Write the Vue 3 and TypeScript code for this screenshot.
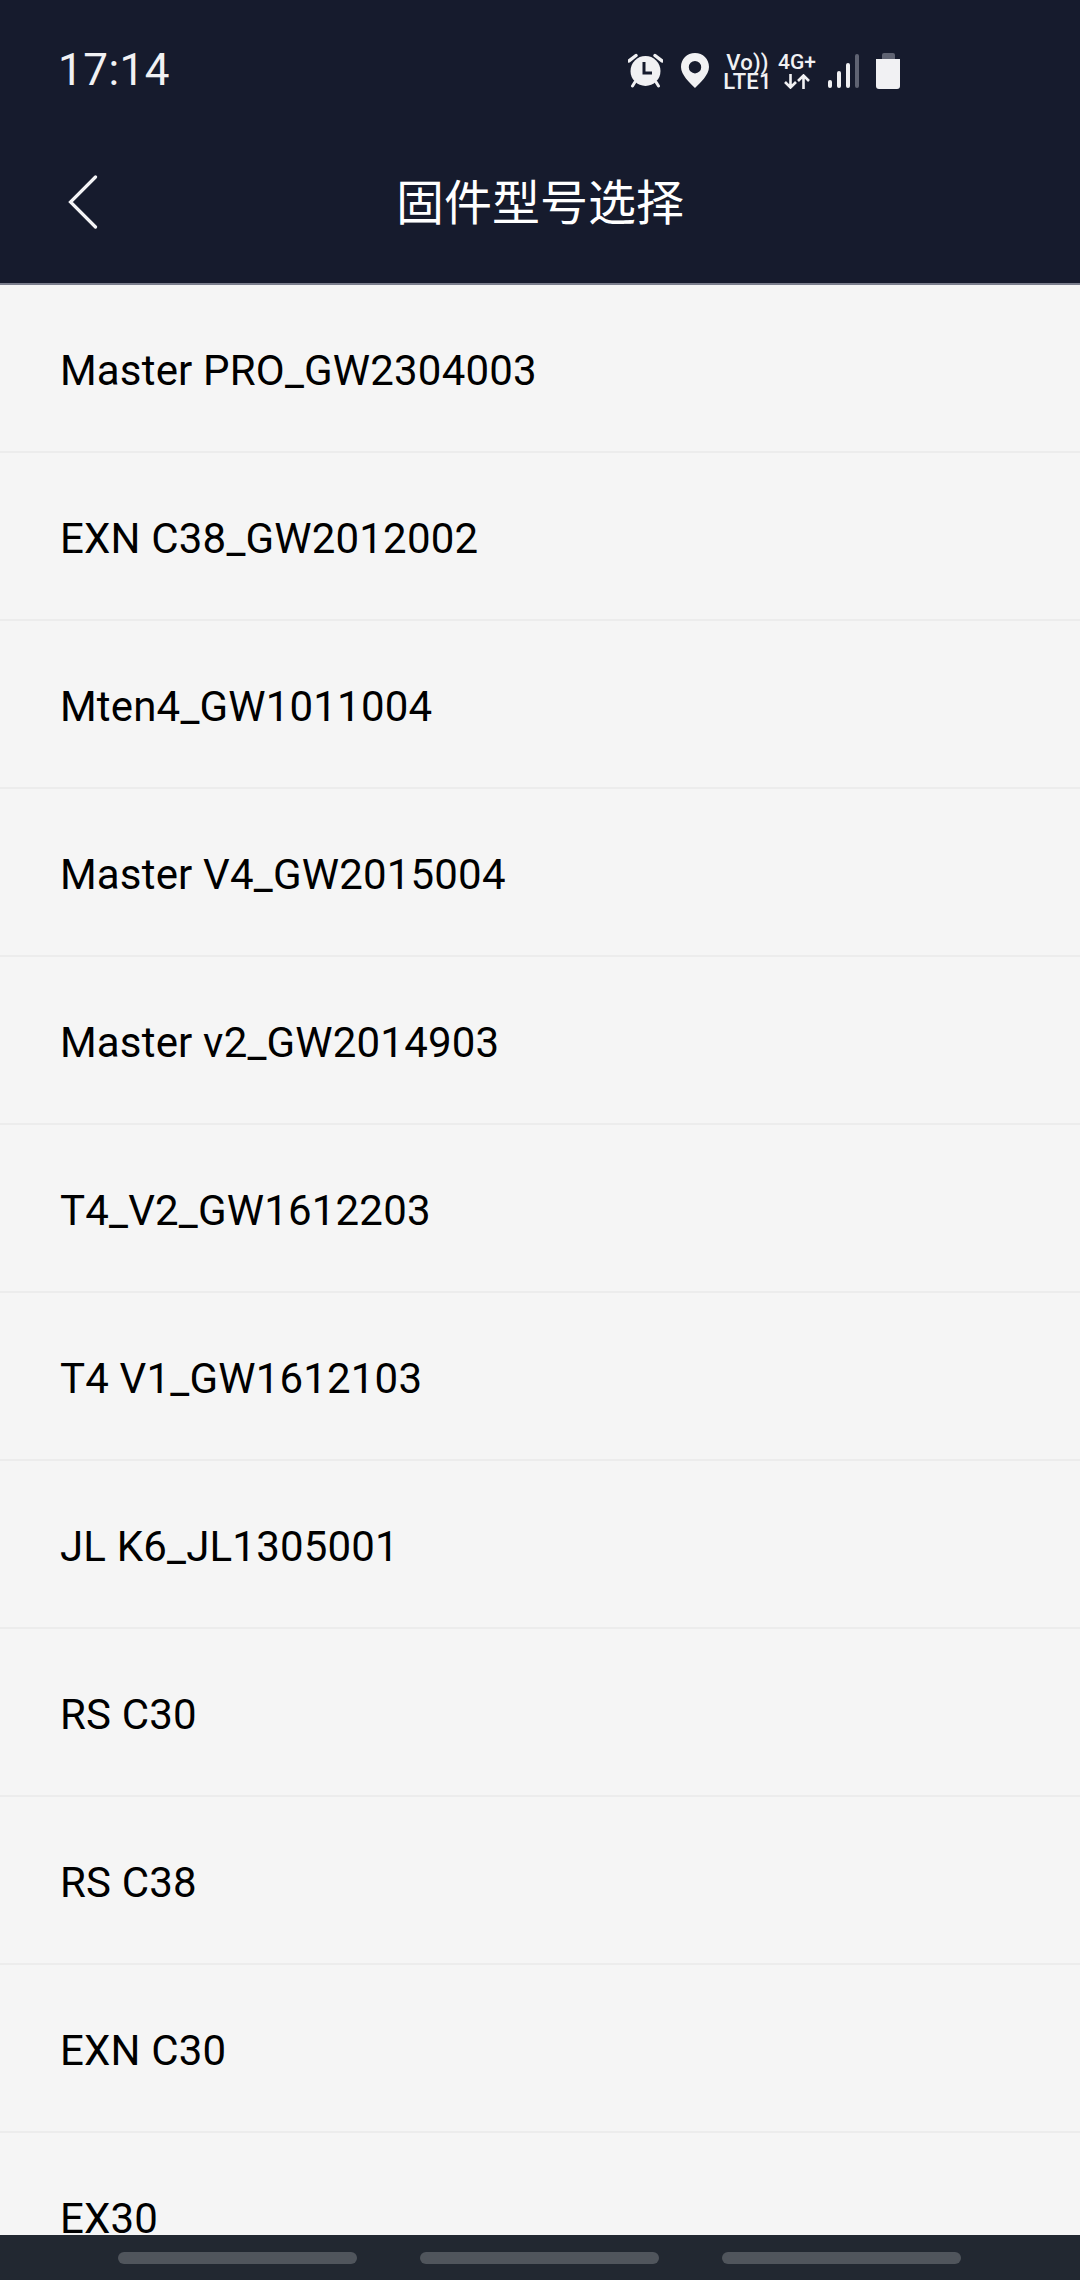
<template>
  <div class="page">
    <header class="top">
      <div class="status">
        <span class="time">17:14</span>
        <div class="status-icons">
          <svg class="ic-alarm" width="35" height="35" viewBox="0 0 35 35">
            <path d="M1 8 L8 2.5 M34 8 L27 2.5" stroke="#f1f1f3" stroke-width="3.4" stroke-linecap="round" />
            <path d="M7 29 L4.5 33 M28 29 L30.5 33" stroke="#f1f1f3" stroke-width="3" stroke-linecap="round" />
            <circle cx="17.5" cy="18" r="15" fill="#f1f1f3" />
            <path d="M16 9 V20 H24" fill="none" stroke="#161b2d" stroke-width="3" />
          </svg>
          <svg class="ic-pin" width="28" height="35" viewBox="0 0 28 35">
            <path fill-rule="evenodd" fill="#f1f1f3" d="M14 0 C6 0 0 6 0 14 C0 22 9 30 14 35 C19 30 28 22 28 14 C28 6 22 0 14 0 Z M14 8 A6.2 6.2 0 1 1 14 20.4 A6.2 6.2 0 1 1 14 8 Z" />
          </svg>
          <div class="volte">
            <span>Vo))</span>
            <span>LTE1</span>
          </div>
          <div class="net">
            <span>4G+</span>
            <svg width="26" height="15" viewBox="0 0 26 15">
              <path d="M6.5 0 V13 M1 8 L6.5 13.5 L12 8 M19.5 15 V2 M14 7 L19.5 1.5 L25 7" fill="none" stroke="#f1f1f3" stroke-width="2.6" />
            </svg>
          </div>
          <div class="signal">
            <i v-for="(h, idx) in bars" :key="idx" :class="{ dim: idx === 3 }" :style="{ height: h + 'px' }"></i>
          </div>
          <div class="battery">
            <i class="cap"></i>
            <i class="body"></i>
          </div>
        </div>
      </div>
      <div class="nav">
        <svg class="back" width="30" height="54" viewBox="0 0 30 54">
          <path d="M27.5 2 L2.5 27 L27.5 52" fill="none" stroke="#f4f4f6" stroke-width="3.2" stroke-linecap="round" stroke-linejoin="miter" />
        </svg>
        <h1 class="title">固件型号选择</h1>
      </div>
    </header>

    <div class="list">
      <div v-for="name in firmwares" :key="name" class="row">{{ name }}</div>
    </div>

    <div class="bottom">
      <i></i>
      <i></i>
      <i></i>
    </div>
  </div>
</template>

<script setup lang="ts">
const bars = [8, 17, 25, 34]

const firmwares: string[] = [
  'Master PRO_GW2304003',
  'EXN C38_GW2012002',
  'Mten4_GW1011004',
  'Master V4_GW2015004',
  'Master v2_GW2014903',
  'T4_V2_GW1612203',
  'T4 V1_GW1612103',
  'JL K6_JL1305001',
  'RS C30',
  'RS C38',
  'EXN C30',
  'EX30',
]
</script>

<style>
html, body { margin: 0; background: #f5f5f5; }
</style>

<style scoped>
.page {
  width: 1080px; height: 2280px;
  display: flex; flex-direction: column;
  overflow: hidden;
  background: #f5f5f5;
  font-family: Roboto, "Noto Sans CJK SC", sans-serif;
}

.top {
  height: 283px;
  background: #161b2d;
  border-bottom: 2px solid #7b7e8d;
  flex: none;
}

.status {
  height: 140px;
  display: flex;
  align-items: flex-start;
  padding: 53px 0 0 58px;
  box-sizing: border-box;
}
.time {
  color: #f1f1f3;
  font-size: 44px;
  line-height: 34px;
  letter-spacing: 0.5px;
  width: 570px;
}
.status-icons { display: flex; align-items: flex-start; color: #f1f1f3; }
.ic-pin { margin-left: 18px; }

.volte {
  margin-left: 15px;
  width: 47px;
  display: flex; flex-direction: column; align-items: center;
  font-size: 22px; font-weight: 500; line-height: 19px;
  letter-spacing: 0.2px;
}
.net {
  margin-left: 7px;
  width: 38px;
  padding-top: 1px;
  display: flex; flex-direction: column; align-items: center; gap: 3px;
  font-size: 21px; font-weight: 500; line-height: 17px;
}

.signal {
  margin-left: 12px;
  height: 35px;
  display: flex; align-items: flex-end; gap: 5px;
}
.signal i { width: 4px; background: #f1f1f3; border-radius: 2px; }
.signal i.dim { background: #5f6372; }

.battery {
  margin-left: 17px;
  width: 24px; height: 36px;
  display: flex; flex-direction: column; align-items: center;
}
.battery .cap { width: 13px; height: 6px; background: #5f6372; border-radius: 2px 2px 0 0; }
.battery .body { width: 24px; height: 30px; background: #f1f1f3; border-radius: 0 0 3px 3px; }

.nav {
  height: 143px;
  position: relative;
  display: flex; align-items: flex-start; justify-content: center;
}
.back { position: absolute; left: 68px; top: 35px; }
.title {
  margin: 0;
  color: #fff;
  font-size: 48px; font-weight: 400;
  line-height: 64px;
  margin-top: 32px;
}

.list { flex: 1; min-height: 0; overflow: hidden; }
.row {
  height: 168px;
  box-sizing: border-box;
  padding: 4px 0 0 60px;
  display: flex; align-items: center;
  border-bottom: 2px solid #ececec;
  color: #000;
  font-size: 42px;
  letter-spacing: 0.18px;
}

.bottom {
  height: 45px;
  flex: none;
  background: #222831;
  display: flex;
  align-items: flex-start;
  justify-content: center;
  gap: 63px;
  padding: 17px 2px 0 0;
  box-sizing: border-box;
}
.bottom i { width: 239px; height: 12px; background: #50555c; border-radius: 6px; }
</style>
